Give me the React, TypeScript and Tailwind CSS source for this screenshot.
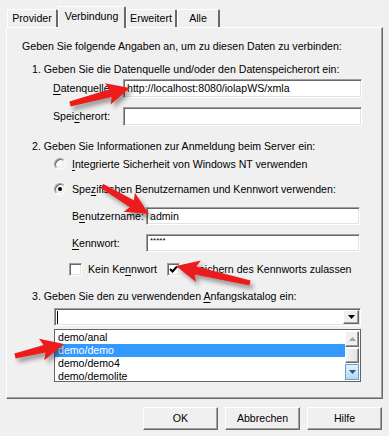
import React from 'react';

type Pt = [number, number];

// red callout arrow as a polygon: tapered shaft + swept head
const arrowPoints = (tail: Pt, tip: Pt, w0: number, w1: number, headLen: number, headW: number) => {
  const dx = tip[0] - tail[0];
  const dy = tip[1] - tail[1];
  const len = Math.hypot(dx, dy);
  const ux = dx / len;
  const uy = dy / len;
  const nx = -uy;
  const ny = ux;
  const bx = tip[0] - ux * headLen;
  const by = tip[1] - uy * headLen;
  const pts: Pt[] = [
    [tail[0] + (nx * w0) / 2, tail[1] + (ny * w0) / 2],
    [bx + (nx * w1) / 2, by + (ny * w1) / 2],
    [bx - ux * 3 + (nx * headW) / 2, by - uy * 3 + (ny * headW) / 2],
    tip,
    [bx - ux * 3 - (nx * headW) / 2, by - uy * 3 - (ny * headW) / 2],
    [bx - (nx * w1) / 2, by - (ny * w1) / 2],
    [tail[0] - (nx * w0) / 2, tail[1] - (ny * w0) / 2],
  ];
  return pts.map((p) => `${p[0].toFixed(1)},${p[1].toFixed(1)}`).join(' ');
};

const arrows: { tail: Pt; tip: Pt }[] = [
  { tail: [70, 104], tip: [130, 88] },
  { tail: [102, 186], tip: [149, 214] },
  { tail: [250, 283], tip: [176, 266] },
  { tail: [15, 356], tip: [64, 344] },
];

const sunken =
  'border border-t-[#a0a0a0] border-l-[#a0a0a0] border-r-white border-b-white shadow-[inset_1px_1px_0_#696969,inset_-1px_-1px_0_#e3e3e3] bg-white';
const raised =
  'border border-t-white border-l-white border-r-[#696969] border-b-[#696969] shadow-[inset_-1px_-1px_0_#a0a0a0]';

const U = ({ children }: { children: React.ReactNode }) => <span className="underline underline-offset-2">{children}</span>;

const Radio = ({ checked }: { checked?: boolean }) => (
  <div className="w-[12px] h-[12px] rounded-full border border-t-[#a0a0a0] border-l-[#a0a0a0] border-r-white border-b-white bg-[radial-gradient(circle_at_35%_35%,#ffffff,#e4e4e4)] shadow-[inset_1px_1px_0_#696969] flex items-center justify-center shrink-0">
    {checked && <div className="w-[4px] h-[4px] rounded-full bg-black" />}
  </div>
);

const Checkbox = ({ checked }: { checked?: boolean }) => (
  <div className={`w-[13px] h-[13px] ${sunken} flex items-center justify-center shrink-0`}>
    {checked && (
      <svg width="9" height="9" viewBox="0 0 9 9">
        <path d="M1 4 L3.5 6.5 L8 1.5" stroke="#000" strokeWidth="2" fill="none" />
      </svg>
    )}
  </div>
);

const Tab = ({ label, w, active }: { label: string; w: string; active?: boolean }) => (
  <div
    className={`${w} ${
      active ? 'h-[22px] -mb-px z-10 bg-[#f0f0f0] pb-[3px]' : 'h-[18px]'
    } flex items-center justify-center border-t border-l border-t-white border-l-white border-r-2 border-r-[#696969] rounded-t-[2px]`}
  >
    {label}
  </div>
);

const Button = ({ label }: { label: string }) => (
  <div className={`w-[75px] h-[23px] ${raised} flex items-center justify-center bg-[#f0f0f0]`}>{label}</div>
);

const App: React.FC = () => {
  return (
    <div className="relative w-[389px] h-[436px] bg-[#f0f0f0] text-black text-[10.6px] leading-[13px] font-['Liberation_Sans',Arial,sans-serif] overflow-hidden">
      {/* Tabs */}
      <div className="h-[27px] pl-[7px] flex items-end">
        <Tab label="Provider" w="w-[51px]" />
        <Tab label="Verbindung" w="w-[68px]" active />
        <Tab label="Erweitert" w="w-[51px]" />
        <Tab label="Alle" w="w-[43px]" />
      </div>

      {/* Panel */}
      <div className="ml-[6px] w-[377px] h-[372px] border-t border-l border-t-white border-l-white border-r border-b border-r-[#696969] border-b-[#696969] shadow-[inset_-1px_-1px_0_#a0a0a0] flex flex-col">
        <div className="mt-[11px] h-[14px] flex items-center pl-[15px]">
          <span>Geben Sie folgende Angaben an, um zu diesen Daten zu verbinden:</span>
        </div>
        <div className="mt-[9px] h-[14px] flex items-center pl-[25px]">
          <span>1. Geben Sie die Datenquelle und/oder den Datenspeicherort ein:</span>
        </div>
        <div className="mt-[3px] h-[19px] flex items-center pl-[46px]">
          <div className="w-[70px]">
            <U>D</U>atenquelle:
          </div>
          <div className={`w-[239px] h-[19px] ${sunken} flex items-center pl-[3px]`}>http://localhost:8080/iolapWS/xmla</div>
        </div>
        <div className="mt-[9px] h-[19px] flex items-center pl-[46px]">
          <div className="w-[70px]">
            Spei<U>c</U>herort:
          </div>
          <div className={`w-[239px] h-[19px] ${sunken}`} />
        </div>
        <div className="mt-[13px] h-[14px] flex items-center pl-[25px]">
          <span>2. Geben Sie Informationen zur Anmeldung beim Server ein:</span>
        </div>
        <div className="mt-[4px] h-[14px] flex items-center pl-[47px] gap-[6px]">
          <Radio />
          <span>
            <U>I</U>ntegrierte Sicherheit von Windows NT verwenden
          </span>
        </div>
        <div className="mt-[11px] h-[14px] flex items-center pl-[47px] gap-[6px]">
          <Radio checked />
          <span>
            Spe<U>z</U>ifischen Benutzernamen und Kennwort verwenden:
          </span>
        </div>
        <div className="mt-[11px] h-[18px] flex items-center pl-[65px]">
          <div className="w-[74px]">
            B<U>e</U>nutzername:
          </div>
          <div className={`w-[214px] h-[18px] ${sunken} flex items-center pl-[3px]`}>admin</div>
        </div>
        <div className="mt-[9px] h-[18px] flex items-center pl-[65px]">
          <div className="w-[74px]">
            <U>K</U>ennwort:
          </div>
          <div className={`w-[214px] h-[18px] ${sunken} pl-[3px] pt-[1px] text-[8px] leading-[9px]`}>*****</div>
        </div>
        <div className="mt-[11px] h-[13px] flex items-center pl-[62px]">
          <div className="w-[98px] flex items-center">
            <Checkbox />
            <span className="ml-[6px]">
              Kein Ke<U>n</U>nwort
            </span>
          </div>
          <Checkbox checked />
          <span className="ml-[6px]">Speichern des Kennworts zulassen</span>
        </div>
        <div className="mt-[13px] h-[14px] flex items-center pl-[25px]">
          <span>
            3. Geben Sie den zu verwendenden <U>A</U>nfangskatalog ein:
          </span>
        </div>
        {/* Combo */}
        <div className="mt-[5px] ml-[47px] w-[307px] h-[18px]">
          <div className={`w-full h-full ${sunken} flex items-center justify-between pl-[2px] pr-[1px]`}>
            <div className="w-px h-[13px] bg-black" />
            <div className={`w-[16px] h-[14px] ${raised} bg-[#f0f0f0] flex items-center justify-center`}>
              <svg width="7" height="4" viewBox="0 0 7 4">
                <path d="M0 0 H7 L3.5 4 Z" fill="#000" />
              </svg>
            </div>
          </div>
        </div>
        {/* List */}
        <div className="mt-[3px] ml-[47px] w-[307px] h-[53px] border border-[#646464] bg-white flex">
          <div className="flex-1 flex flex-col pt-[1px]">
            <div className="h-[13px] flex items-center pl-[3px]">demo/anal</div>
            <div className="h-[13px] flex items-center pl-[3px] bg-[#3399ff] text-white">demo/demo</div>
            <div className="h-[13px] flex items-center pl-[3px]">demo/demo4</div>
            <div className="h-[13px] flex items-center pl-[3px]">demo/demolite</div>
          </div>
          <div className="w-[15px] flex flex-col py-px pr-px gap-[1px]">
            <div className={`h-[16px] ${raised} bg-[#f0f0f0] flex items-center justify-center`}>
              <svg width="7" height="4" viewBox="0 0 7 4">
                <path d="M0 4 H7 L3.5 0 Z" fill="#a0a0a0" />
              </svg>
            </div>
            <div className={`h-[16px] ${raised} bg-[linear-gradient(to_right,#f4f4f4,#e2e2e2)]`} />
            <div className="h-[16px] border border-[#6ea1c8] bg-[linear-gradient(to_bottom,#e4f1fb,#b5d6f0)] flex items-center justify-center">
              <svg width="7" height="4" viewBox="0 0 7 4">
                <path d="M0 0 H7 L3.5 4 Z" fill="#1f5c8c" />
              </svg>
            </div>
          </div>
        </div>
      </div>

      {/* Buttons */}
      <div className="mt-[8px] flex justify-end pr-[7px] gap-[7px]">
        <Button label="OK" />
        <Button label="Abbrechen" />
        <Button label="Hilfe" />
      </div>

      {/* Red callout arrows */}
      <svg className="absolute inset-0 pointer-events-none" width="389" height="436">
        <defs>
          <filter id="sh" x="-20%" y="-20%" width="160%" height="160%">
            <feDropShadow dx="3" dy="4" stdDeviation="2" floodColor="#000" floodOpacity="0.35" />
          </filter>
        </defs>
        {arrows.map((a, i) => (
          <polygon key={i} points={arrowPoints(a.tail, a.tip, 5, 8, 20, 22)} fill="#ec1c1c" filter="url(#sh)" />
        ))}
      </svg>
    </div>
  );
};

export default App;
